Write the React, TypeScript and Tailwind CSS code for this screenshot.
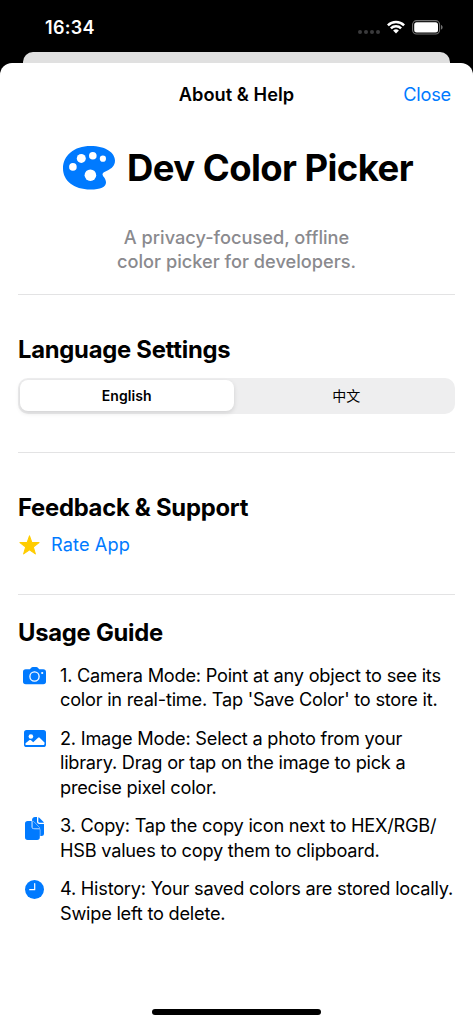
import { useState } from 'react'
import type { ReactNode } from 'react'
import { clsx } from 'clsx'

interface IconProps {
  className?: string
}

function PaletteIcon({ className }: IconProps) {
  return (
    <svg viewBox="0 0 52 44" className={className}>
      <path
        fill="#007aff"
        d="M27.5 0C43 0 52 7 52 14.5c0 5.500-3.500 8-7.500 10-3 1.400-5 2.200-5 3.700 0 2.300 3.500 3.800 3.500 8.300 0 4.500-5.500 7-15.500 7C10.500 43.500 0 34.500 0 22.500 0 9.500 11 0 27.500 0Z"
      />
      <g fill="#fff">
        <circle cx="18.300" cy="12.400" r="4.500" />
        <circle cx="29.800" cy="9.800" r="3.800" />
        <circle cx="39.900" cy="12.700" r="3.100" />
        <circle cx="9.900" cy="20.900" r="3.800" />
        <circle cx="27.400" cy="29.200" r="5.800" />
      </g>
    </svg>
  )
}

function StarIcon({ className }: IconProps) {
  return (
    <svg viewBox="0 0 20 19" className={className}>
      <path
        fill="#ffcc00"
        stroke="#ffcc00"
        strokeWidth="1"
        strokeLinejoin="round"
        d="M10 .8l2.200 6.300 6.900.1-5.500 4.200 2 6.600-5.600-3.900L4.400 18l2-6.600L.9 7.200l6.900-.1z"
      />
    </svg>
  )
}

function CameraIcon({ className }: IconProps) {
  return (
    <svg viewBox="0 0 23 18" className={className}>
      <path
        fill="#007aff"
        d="M2.800 2.300h3.400c.5 0 .8-.2 1.100-.6L8 .9C8.500.3 9 0 9.900 0h3.300c.9 0 1.400.3 1.900.9l.7.8c.3.4.6.6 1.100.6h3.300c1.900 0 2.800.9 2.800 2.700v9.500c0 1.800-.9 2.700-2.800 2.700H2.800C.9 17.200 0 16.300 0 14.500V5c0-1.800.9-2.700 2.800-2.700Z"
      />
      <circle cx="11.500" cy="9.500" r="4.600" fill="none" stroke="#fff" strokeWidth="1.300" />
      <circle cx="19.200" cy="6" r="1.100" fill="#fff" />
    </svg>
  )
}

function PhotoIcon({ className }: IconProps) {
  return (
    <svg viewBox="0 0 22 17" className={className}>
      <rect width="22" height="17" rx="2.600" fill="#007aff" />
      <circle cx="6.900" cy="6.500" r="2.300" fill="#fff" />
      <path
        fill="#fff"
        d="M1.500 14.800v-1.500l3.700-3c.6-.5 1.200-.5 1.800 0l2.200 1.900 4.600-4.300c.7-.6 1.500-.6 2.100 0l4.600 4.600v1.300c0 .8-.5 1.200-1.300 1.200H2.800c-.8 0-1.300 0-1.300-.2Z"
      />
    </svg>
  )
}

function DocsIcon({ className }: IconProps) {
  return (
    <svg viewBox="0 0 19 23" className={className}>
      <path
        fill="#007aff"
        d="M7 3.500C7 1.200 8 0 10 0h2v4.500C12 6 12.800 7 14.500 7H19v9.500c0 1.700-.9 2.500-2.600 2.500H7Z"
      />
      <path fill="#007aff" d="M13.300.2c.4.100.7.300 1 .600l4 4c.3.300.5.600.6 1h-4.400c-.8 0-1.200-.4-1.200-1.200Z" />
      <path
        fill="#007aff"
        stroke="#fff"
        strokeWidth="1"
        paintOrder="stroke"
        d="M2.700 4h3.900v5.800c0 1.600.8 2.500 2.500 2.500h5.700v8c0 1.800-.9 2.700-2.700 2.700H2.700C.9 23 0 22.100 0 20.300V6.700C0 4.900.9 4 2.700 4Z"
      />
      <path
        fill="#007aff"
        stroke="#fff"
        strokeWidth=".8"
        paintOrder="stroke"
        d="M7.700 4.100c.5.100.9.400 1.300.800l5 5.100c.4.400.6.800.7 1.300H9c-.9 0-1.300-.4-1.300-1.300Z"
      />
    </svg>
  )
}

function ClockIcon({ className }: IconProps) {
  return (
    <svg viewBox="0 0 19 19" className={className}>
      <circle cx="9.500" cy="9.500" r="9.500" fill="#007aff" />
      <path d="M9.700 3.600v6.100H4.700" fill="none" stroke="#fff" strokeWidth="1.200" strokeLinecap="round" strokeLinejoin="round" />
    </svg>
  )
}

function StatusBar() {
  return (
    <div className="flex h-[52px] items-start justify-between pt-[17px] pr-[30px] pl-[45px]">
      <span className="pt-px text-[18px] leading-5 font-semibold tracking-[0.3px] text-white">16:34</span>
      <div className="flex items-start pt-[2px]">
        <div className="mt-[11px] mr-[7px] flex gap-[2px]">
          {[0, 1, 2, 3].map((dot) => (
            <span key={dot} className="size-1 rounded-full bg-[#3a3a3c]" />
          ))}
        </div>
        <svg viewBox="0 0 18 14" className="mt-[1px] mr-[7px] h-[14px] w-[18px]">
          <g fill="none" stroke="#fff" strokeWidth="2.500">
            <path d="M.9 5.300a11.500 11.500 0 0 1 16.200 0" />
            <path d="M3.900 8.300a7.200 7.200 0 0 1 10.200 0" />
          </g>
          <path fill="#fff" d="M6.100 10.600a4.200 4.200 0 0 1 5.800 0L9 13.600z" />
        </svg>
        <svg viewBox="0 0 31 15" className="mt-[.5px] h-[15px] w-[31px]">
          <rect x=".6" y=".6" width="27" height="13.400" rx="4" fill="none" stroke="#727272" strokeWidth="1.100" />
          <rect x="2.200" y="2.200" width="23.800" height="10.200" rx="2.500" fill="#fff" />
          <path d="M29 5v4.600c1-.4 1.600-1.200 1.600-2.300S30 5.400 29 5Z" fill="#727272" />
        </svg>
      </div>
    </div>
  )
}

type Language = 'en' | 'zh'

function LanguagePicker() {
  const [language, setLanguage] = useState<Language>('en')

  const options: { id: Language; label: string }[] = [
    { id: 'en', label: 'English' },
    { id: 'zh', label: '中文' },
  ]

  return (
    <div className="grid h-9 grid-cols-2 gap-[6px] rounded-[10px] bg-[#eeeeef] p-[2px]">
      {options.map(({ id, label }) => (
        <button
          key={id}
          onClick={() => setLanguage(id)}
          className={clsx(
            'h-[31px] rounded-[8px] pt-[2px] text-[14px] leading-none tracking-[0.1px]',
            language === id ? 'bg-white font-semibold shadow-[0_2px_5px_rgba(0,0,0,0.12)]' : 'font-normal',
          )}
        >
          {label}
        </button>
      ))}
    </div>
  )
}

interface GuideItem {
  icon: ReactNode
  lines: string[]
}

const guide: GuideItem[] = [
  {
    icon: <CameraIcon className="mt-[4px] h-[18px] w-[23px]" />,
    lines: ['1. Camera Mode: Point at any object to see its', "color in real-time. Tap 'Save Color' to store it."],
  },
  {
    icon: <PhotoIcon className="mt-[4px] h-[17px] w-[22px]" />,
    lines: ['2. Image Mode: Select a photo from your', 'library. Drag or tap on the image to pick a', 'precise pixel color.'],
  },
  {
    icon: <DocsIcon className="mt-[4px] h-[23px] w-[19px]" />,
    lines: ['3. Copy: Tap the copy icon next to HEX/RGB/', 'HSB values to copy them to clipboard.'],
  },
  {
    icon: <ClockIcon className="mt-[4px] size-[19px]" />,
    lines: ['4. History: Your saved colors are stored locally.', 'Swipe left to delete.'],
  },
]

function SectionTitle({ children }: { children: ReactNode }) {
  return <h2 className="text-[23.800px] leading-[30px] font-bold tracking-[-0.25px]">{children}</h2>
}

export default function App() {
  return (
    <div className="flex h-[1024px] w-[473px] flex-col overflow-hidden bg-black font-['Inter','Noto_Sans_CJK_SC',sans-serif] text-black">
      <StatusBar />
      <div className="mx-[23px] h-[11px] shrink-0 rounded-t-[10px] bg-[#e0e0e0]" />
      <main className="flex flex-1 flex-col rounded-t-[12px] bg-white px-[18px]">
        <header className="grid h-[63px] grid-cols-[1fr_auto_1fr] items-center text-[18.200px]">
          <span />
          <h1 className="font-semibold tracking-[0.05px]">About &amp; Help</h1>
          <button className="justify-self-end pr-[4px] tracking-[-0.2px] text-[#007aff]">Close</button>
        </header>

        <div className="mt-[19px] flex h-[46px] items-center justify-center gap-[12px] pl-[3px]">
          <PaletteIcon className="h-[44px] w-[52px]" />
          <span className="text-[36.500px] leading-none font-bold tracking-[-0.58px] whitespace-nowrap">Dev Color Picker</span>
        </div>
        <p className="mt-[34px] text-center text-[18.200px] leading-[24.300px] font-medium text-[#8a8a8e]">
          A privacy-focused, offline
          <br />
          color picker for developers.
        </p>

        <section className="mt-[20px] border-t border-[#e3e3e4] pt-[40px]">
          <SectionTitle>Language Settings</SectionTitle>
          <div className="mt-[13px]">
            <LanguagePicker />
          </div>
        </section>

        <section className="mt-[38px] border-t border-[#e3e3e4] pt-[40px]">
          <SectionTitle>Feedback &amp; Support</SectionTitle>
          <button className="mt-[10px] flex h-[24px] items-center gap-[11px] pl-px text-[18.200px] tracking-[0.1px] text-[#007aff]">
            <StarIcon className="h-[20px] w-[21px]" />
            Rate App
          </button>
        </section>

        <section className="mt-[37px] border-t border-[#e3e3e4] pt-[23px]">
          <SectionTitle>Usage Guide</SectionTitle>
          <ul className="mt-[15px] flex flex-col gap-[14px]">
            {guide.map(({ icon, lines }) => (
              <li key={lines[0]} className="flex gap-[9px]">
                <div className="flex w-[33px] shrink-0 items-start justify-center">{icon}</div>
                <p className="text-[18.200px] leading-[24.500px] tracking-[-0.230px] whitespace-nowrap">
                  {lines.map((line) => (
                    <span key={line} className="block">
                      {line}
                    </span>
                  ))}
                </p>
              </li>
            ))}
          </ul>
        </section>

        <div className="mt-auto mb-[9px] h-[6px] w-[169px] self-center rounded-full bg-black" />
      </main>
    </div>
  )
}
